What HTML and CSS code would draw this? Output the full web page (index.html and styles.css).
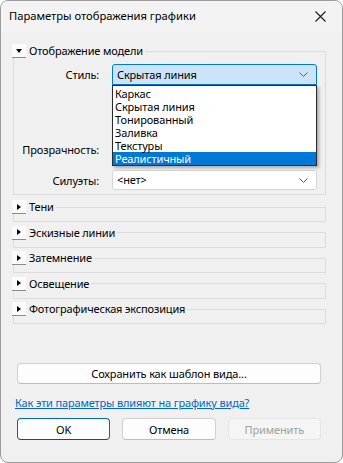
FILE: index.html
```html
<!DOCTYPE html>
<html lang="ru">
<head>
    <meta charset="UTF-8">
    <meta name="viewport" content="width=device-width, initial-scale=1.0">
    <title>Параметры отображения графики</title>
    <link rel="stylesheet" href="styles.css">
</head>
<body>
    <div class="window">
        <div class="titlebar">
            <span class="title">Параметры отображения графики</span>
            <button class="close" aria-label="Закрыть">
                <svg width="11" height="11" viewBox="0 0 11 11">
                    <path d="M0.5 0.5 L10.5 10.5 M10.5 0.5 L0.5 10.5" stroke="#1a1a1a" stroke-width="1.1" fill="none"/>
                </svg>
            </button>
        </div>

        <div class="content">
            <!-- Model display -->
            <fieldset class="group">
                <legend>
                    <span class="expander open"></span>
                    <span class="legend-text">Отображение модели</span>
                </legend>
                <div class="row row-style">
                    <label>Стиль:</label>
                    <div class="combo">
                        <div class="select focused">
                            <span>Скрытая линия</span>
                            <svg class="chevron" width="9" height="5" viewBox="0 0 9 5"><path d="M0.5 0.5 L4.5 4.5 L8.5 0.5" stroke="#5c5c5c" fill="none"/></svg>
                        </div>
                        <ul class="dropdown">
                            <li>Каркас</li>
                            <li>Скрытая линия</li>
                            <li>Тонированный</li>
                            <li>Заливка</li>
                            <li>Текстуры</li>
                            <li class="selected">Реалистичный</li>
                        </ul>
                    </div>
                </div>
                <div class="row row-transparency">
                    <label>Прозрачность:</label>
                    <div></div>
                </div>
                <div class="row row-silhouette">
                    <label>Силуэты:</label>
                    <div class="select">
                        <span>&lt;нет&gt;</span>
                        <svg class="chevron" width="9" height="5" viewBox="0 0 9 5"><path d="M0.5 0.5 L4.5 4.5 L8.5 0.5" stroke="#5c5c5c" fill="none"/></svg>
                    </div>
                </div>
            </fieldset>

            <fieldset class="group collapsed">
                <legend><span class="expander"></span><span class="legend-text">Тени</span></legend>
                <div class="body"></div>
            </fieldset>
            <fieldset class="group collapsed">
                <legend><span class="expander"></span><span class="legend-text">Эскизные линии</span></legend>
                <div class="body"></div>
            </fieldset>
            <fieldset class="group collapsed">
                <legend><span class="expander"></span><span class="legend-text">Затемнение</span></legend>
                <div class="body"></div>
            </fieldset>
            <fieldset class="group collapsed">
                <legend><span class="expander"></span><span class="legend-text">Освещение</span></legend>
                <div class="body"></div>
            </fieldset>
            <fieldset class="group collapsed">
                <legend><span class="expander"></span><span class="legend-text">Фотографическая экспозиция</span></legend>
                <div class="body"></div>
            </fieldset>
        </div>

        <div class="footer">
            <button class="btn btn-wide">Сохранить как шаблон вида...</button>
            <a href="#" class="help-link">Как эти параметры влияют на графику вида?</a>
            <div class="actions">
                <button class="btn btn-default">OK</button>
                <button class="btn">Отмена</button>
                <button class="btn" disabled>Применить</button>
            </div>
        </div>
    </div>
</body>
</html>
```

FILE: styles.css
```css
:root {
    --window-bg: #f0f0f0;
    --frame-color: #dcdcdc;
    --accent: #0078d4;
    --text-color: #000;
}

* {
    box-sizing: border-box;
}

body {
    margin: 0;
    background: #fff;
    font-family: 'Noto Sans', 'Liberation Sans', sans-serif;
    font-size: 11px;
    letter-spacing: -0.15px;
    color: var(--text-color);
}

.window {
    width: 343px;
    height: 463px;
    border: 1px solid #9c9c9c;
    border-radius: 8px;
    background-color: var(--window-bg);
    overflow: hidden;
    display: flex;
    flex-direction: column;
}

.titlebar {
    height: 31px;
    flex: none;
    display: flex;
    align-items: center;
    justify-content: space-between;
    padding-left: 8px;
    background-color: #f3f3f3;
}

.title {
    font-size: 11.2px;
    letter-spacing: 0;
    line-height: 16px;
    margin-top: -1px;
}

.close {
    width: 46px;
    height: 30px;
    border: none;
    background: none;
    padding: 0 0 0 3px;
    display: flex;
    align-items: center;
    justify-content: center;
    margin-top: -1px;
}

.content {
    padding: 12px 16px 0 12px;
}

/* Group boxes */
.group {
    margin: 0;
    padding: 0;
    border: 1px solid var(--frame-color);
    min-width: 0;
}

.group legend {
    display: flex;
    align-items: center;
    height: 14px;
    padding: 0 2px 0 0;
    margin-left: -2px;
}

.expander {
    width: 14px;
    height: 14px;
    background-color: #fbfbfb;
    border-bottom: 1px solid #8a8a8a;
    display: flex;
    align-items: center;
    justify-content: center;
}

.expander::before {
    content: '';
    width: 0;
    height: 0;
    border-top: 3.5px solid transparent;
    border-bottom: 3.5px solid transparent;
    border-left: 4px solid #000;
    margin-left: -1px;
}

.expander.open::before {
    border-left: 3.5px solid transparent;
    border-right: 3.5px solid transparent;
    border-top: 4px solid #000;
    border-bottom: none;
    margin-left: 0;
    margin-top: 1px;
}

.legend-text {
    margin-left: 3px;
    line-height: 14px;
}

.content > .group + .group.collapsed {
    margin-top: 3.5px;
}

.content > .group:first-child + .group {
    margin-top: 5px;
}

.collapsed .body {
    height: 7px;
}

/* Rows inside the model group */
.row {
    display: grid;
    grid-template-columns: 85px 205px;
    column-gap: 13px;
    align-items: center;
}

.row label {
    text-align: right;
}

.row-style {
    margin-top: 6px;
}

.row-transparency {
    margin-top: 54px;
    height: 20px;
}

.row-silhouette {
    margin-top: 11px;
    margin-bottom: 4px;
}

.combo {
    position: relative;
}

.select {
    height: 20px;
    background-color: #fff;
    border: 1px solid #d6d6d6;
    border-radius: 3px;
    display: flex;
    align-items: center;
    justify-content: space-between;
    padding: 0 8px 0 4px;
    line-height: 16px;
}

.select.focused {
    height: 21px;
    background-color: #cce4f7;
    border-color: var(--accent);
    border-radius: 3px 3px 0 0;
}

.dropdown {
    position: absolute;
    top: 100%;
    left: 0;
    width: 100%;
    margin: 0;
    padding: 0;
    list-style: none;
    background-color: #fff;
    border: 1px solid #2a2a2a;
    box-shadow: 2px 2px 3px rgba(0, 0, 0, 0.3);
    z-index: 2;
}

.dropdown li {
    height: 13px;
    line-height: 13px;
    padding-left: 2px;
}

.dropdown li:first-child {
    margin-top: 1px;
}

.dropdown li.selected {
    background-color: #0078d7;
    color: #fff;
}

/* Footer */
.footer {
    padding: 39px 21px 0 16px;
    display: flex;
    flex-direction: column;
}

.btn {
    font-family: inherit;
    font-size: 11px;
    letter-spacing: -0.15px;
    color: #000;
    background-color: #fdfdfd;
    border: 1px solid #d0d0d0;
    border-bottom-color: #bdbdbd;
    border-radius: 4px;
    height: 22px;
    padding: 0;
}

.btn-wide {
    height: 21px;
}

.btn-default {
    border-color: #0067c0;
    border-bottom-color: #0050a0;
}

.btn:disabled {
    background-color: #f5f5f5;
    border-color: #e5e5e5;
    color: #a0a0a0;
}

.help-link {
    margin-top: 11px;
    margin-left: -2px;
    line-height: 16px;
    color: #0066cc;
    text-decoration: underline;
}

.actions {
    margin-top: 7px;
    display: grid;
    grid-template-columns: repeat(3, 1fr);
    column-gap: 12px;
}
```
